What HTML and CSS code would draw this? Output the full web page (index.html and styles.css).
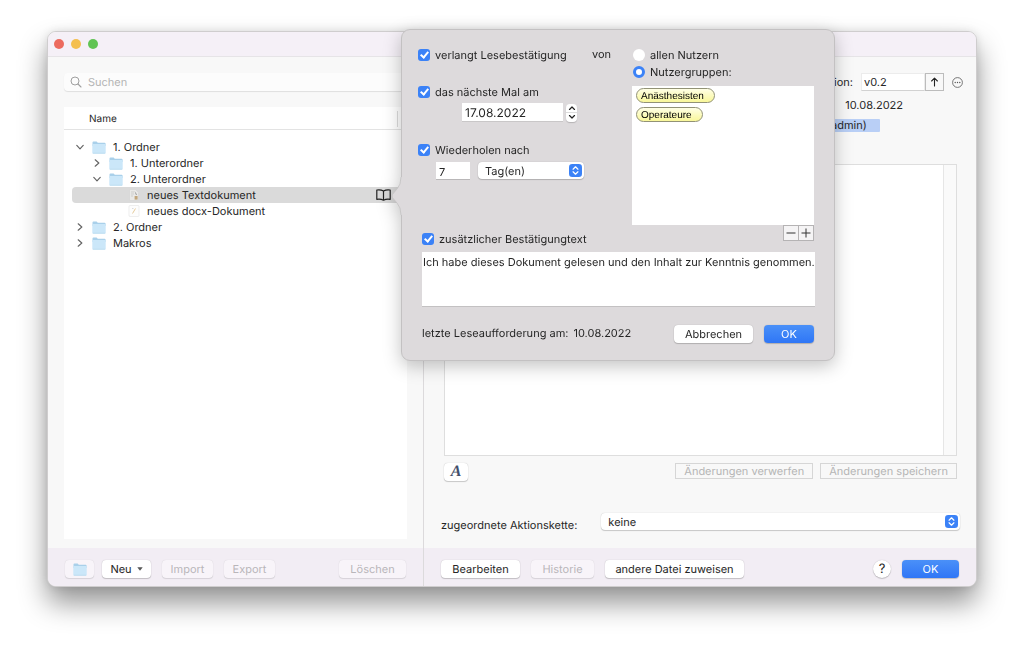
FILE: index.html
```html
<!DOCTYPE html>
<html lang="de">
<head>
<meta charset="utf-8">
<meta name="viewport" content="width=device-width, initial-scale=1">
<title>Dokumente</title>
<link rel="stylesheet" href="styles.css">
</head>
<body>
<svg class="defs" aria-hidden="true">
  <symbol id="folder" viewBox="0 0 14 13">
    <path d="M0.5 1.6Q0.5 0.6 1.5 0.6H4.6L5.8 1.8H12.6Q13.6 1.8 13.6 2.8V5H0.5Z" fill="#a9d0ea"/>
    <rect x="0.3" y="3" width="13.4" height="9.6" rx="0.8" fill="#cbe7f9"/>
    <path d="M0.8 12.3H13.2" stroke="#b3d7ee" stroke-width="0.7"/>
  </symbol>
  <symbol id="right" viewBox="0 0 8 8"><path d="M2.2 0.8L5.8 4L2.2 7.2" fill="none" stroke="#666" stroke-width="1.2" stroke-linecap="round" stroke-linejoin="round"/></symbol>
  <symbol id="down" viewBox="0 0 8 8"><path d="M0.8 2.4L4 5.8L7.2 2.4" fill="none" stroke="#666" stroke-width="1.2" stroke-linecap="round" stroke-linejoin="round"/></symbol>
  <symbol id="updown" viewBox="0 0 14 14">
    <rect width="14" height="14" rx="3.5" fill="#3b82f7"/>
    <path d="M4.4 5.6L7 3L9.6 5.6M4.4 8.4L7 11L9.6 8.4" fill="none" stroke="#fff" stroke-width="1.3" stroke-linecap="round" stroke-linejoin="round"/>
  </symbol>
</svg>

<main class="window">
  <header class="titlebar">
    <button class="light red" aria-label="Schließen"></button>
    <button class="light yellow" aria-label="Minimieren"></button>
    <button class="light green" aria-label="Zoomen"></button>
  </header>

  <div class="panes">
    <section class="side">
      <div class="side-main">
        <label class="search">
          <svg width="12" height="12" viewBox="0 0 12 12"><circle cx="5" cy="5" r="4" fill="none" stroke="#a0a0a0"/><path d="M8 8L11 11" stroke="#a0a0a0" stroke-width="1.1" stroke-linecap="round"/></svg>
          <input type="search" placeholder="Suchen" aria-label="Suchen">
        </label>
        <div class="list">
          <div class="list-head"><span>Name</span></div>
          <ul class="tree">
            <li class="row"><button class="twist" aria-label="Zuklappen"><svg><use href="#down"/></svg></button><svg class="folder"><use href="#folder"/></svg><span>1. Ordner</span></li>
            <li class="row level1"><button class="twist" aria-label="Aufklappen"><svg><use href="#right"/></svg></button><svg class="folder"><use href="#folder"/></svg><span>1. Unterordner</span></li>
            <li class="row level1"><button class="twist" aria-label="Zuklappen"><svg><use href="#down"/></svg></button><svg class="folder"><use href="#folder"/></svg><span>2. Unterordner</span></li>
            <li class="row level2 selected">
              <svg class="doc" viewBox="0 0 12 12"><path d="M1.5 0.5H7.5L10.5 3.5V11.5H1.5Z" fill="#e9e9e7" stroke="#d0d0d0" stroke-width="0.5"/><path d="M3 3H6M3 5H6M3 7H5" stroke="#c4c4c2" stroke-width="0.7"/><path d="M6.5 2L9 5.5L8 6Z" fill="#8d8f90"/><rect x="6.6" y="7" width="3" height="3.6" fill="#c2a77d"/></svg>
              <span>neues Textdokument</span>
              <svg class="book" viewBox="0 0 15 12"><path d="M7.5 2Q4.5 0.3 0.8 1V10.3Q4.5 9.6 7.5 11.2Q10.5 9.6 14.2 10.3V1Q10.5 0.3 7.5 2V11" fill="none" stroke="#222" stroke-width="1.2" stroke-linejoin="round"/></svg>
            </li>
            <li class="row level2">
              <svg class="doc" viewBox="0 0 12 12"><rect x="1" y="0.5" width="10" height="11" rx="1" fill="#fdfdfd" stroke="#e6e6e6" stroke-width="0.7"/><path d="M4.5 8.5L7.5 3.5" stroke="#e3c58f" stroke-width="0.9"/><path d="M4 3.5H5.5" stroke="#ccc" stroke-width="0.7"/></svg>
              <span>neues docx-Dokument</span>
            </li>
            <li class="row"><button class="twist" aria-label="Aufklappen"><svg><use href="#right"/></svg></button><svg class="folder"><use href="#folder"/></svg><span>2. Ordner</span></li>
            <li class="row"><button class="twist" aria-label="Aufklappen"><svg><use href="#right"/></svg></button><svg class="folder"><use href="#folder"/></svg><span>Makros</span></li>
          </ul>
        </div>
      </div>
      <footer class="bar">
        <button class="btn off w-folder" disabled aria-label="Neuer Ordner"><svg class="folder"><use href="#folder"/></svg></button>
        <button class="btn w-neu">Neu<svg width="6" height="4" viewBox="0 0 6 4"><path d="M0.3 0.3H5.7L3 3.7Z" fill="#555"/></svg></button>
        <button class="btn off w-import" disabled>Import</button>
        <button class="btn off w-import" disabled>Export</button>
        <button class="btn off w-delete" disabled>Löschen</button>
      </footer>
    </section>

    <section class="detail">
      <div class="detail-main">
        <div class="version">
          <label for="version">Version:</label>
          <input id="version" type="text" value="v0.2">
          <button class="up" aria-label="Version erhöhen"><svg width="9" height="10" viewBox="0 0 9 10"><path d="M4.5 9V1.2M1.6 4L4.5 1.1L7.4 4" fill="none" stroke="#222" stroke-width="1.1" stroke-linecap="round" stroke-linejoin="round"/></svg></button>
          <button class="more" aria-label="Mehr"><svg width="11" height="11" viewBox="0 0 11 11"><circle cx="5.5" cy="5.5" r="4.9" fill="none" stroke="#666" stroke-width="0.9"/><circle cx="3.2" cy="5.5" r="0.7" fill="#555"/><circle cx="5.5" cy="5.5" r="0.7" fill="#555"/><circle cx="7.8" cy="5.5" r="0.7" fill="#555"/></svg></button>
        </div>
        <p class="changed">10.08.2022</p>
        <p class="author"><span>(admin)</span></p>
        <div class="editor">
          <textarea aria-label="Inhalt"></textarea>
          <div class="gutter"></div>
        </div>
        <div class="tools">
          <button class="btn font" aria-label="Schrift">A</button>
          <button class="flat first" disabled>Änderungen verwerfen</button>
          <button class="flat" disabled>Änderungen speichern</button>
        </div>
        <div class="chain">
          <label for="chain">zugeordnete Aktionskette:</label>
          <span class="select"><select id="chain"><option>keine</option></select><svg><use href="#updown"/></svg></span>
        </div>
      </div>
      <footer class="bar">
        <button class="btn w-edit">Bearbeiten</button>
        <button class="btn off w-history" disabled>Historie</button>
        <button class="btn w-assign">andere Datei zuweisen</button>
        <button class="btn help" aria-label="Hilfe">?</button>
        <button class="btn primary w-ok">OK</button>
      </footer>
    </section>
  </div>
</main>

<form class="popover">
  <svg class="arrow" viewBox="0 0 11 38"><path d="M11 0H10Q10 8 6 12L1.5 17.3Q0.5 19 1.5 20.7L6 26Q10 30 10 38H11Z" fill="#dddadc"/><path d="M10 0Q10 8 6 12L1.5 17.3Q0.5 19 1.5 20.7L6 26Q10 30 10 38" fill="none" stroke="#c3c1c2" stroke-width="0.8"/></svg>
  <div class="settings">
    <div class="options">
      <div class="line"><label class="check"><input type="checkbox" checked>verlangt Lesebestätigung</label><span class="from">von</span></div>
      <label class="check next"><input type="checkbox" checked>das nächste Mal am</label>
      <div class="date">
        <input type="text" value="17.08.2022" aria-label="Datum">
        <span class="stepper">
          <button type="button" aria-label="Später"><svg viewBox="0 0 8 4"><path d="M1.5 3.5L4 1L6.5 3.5" fill="none" stroke="#222" stroke-width="1.2" stroke-linecap="round" stroke-linejoin="round"/></svg></button>
          <button type="button" aria-label="Früher"><svg viewBox="0 0 8 4"><path d="M1.5 0.5L4 3L6.5 0.5" fill="none" stroke="#222" stroke-width="1.2" stroke-linecap="round" stroke-linejoin="round"/></svg></button>
        </span>
      </div>
      <label class="check again"><input type="checkbox" checked>Wiederholen nach</label>
      <div class="repeat">
        <input type="text" value="7" aria-label="Anzahl">
        <span class="select"><select aria-label="Einheit"><option>Tag(en)</option></select><svg><use href="#updown"/></svg></span>
      </div>
      <label class="check extra"><input type="checkbox" checked>zusätzlicher Bestätigungtext</label>
    </div>
    <div class="users">
      <label class="radio"><input type="radio" name="who">allen Nutzern</label>
      <label class="radio"><input type="radio" name="who" checked>Nutzergruppen:</label>
      <ul class="groups">
        <li>Anästhesisten</li>
        <li>Operateure</li>
      </ul>
      <div class="plusminus">
        <button type="button" aria-label="Entfernen"><svg viewBox="0 0 10 10"><path d="M0.5 5H9.5" stroke="#333"/></svg></button>
        <button type="button" aria-label="Hinzufügen"><svg viewBox="0 0 10 10"><path d="M0.5 5H9.5M5 0.5V9.5" stroke="#333"/></svg></button>
      </div>
    </div>
  </div>
  <textarea class="message" aria-label="Bestätigungstext">Ich habe dieses Dokument gelesen und den Inhalt zur Kenntnis genommen.</textarea>
  <div class="actions">
    <p>letzte Leseaufforderung am:</p><p>10.08.2022</p>
    <button type="button" class="btn w-cancel">Abbrechen</button>
    <button type="button" class="btn primary w-confirm">OK</button>
  </div>
</form>
</body>
</html>
```

FILE: styles.css
```css
* { box-sizing: border-box; }

body {
  margin: 0;
  padding: 31px 47px 62px;
  min-height: 100vh;
  display: flex;
  position: relative;
  background: #fff;
  color: #262626;
  font: 11px/16px Inter, "Liberation Sans", sans-serif;
  text-rendering: geometricPrecision;
}

button, input, select, textarea { font: inherit; color: inherit; text-rendering: inherit; margin: 0; padding: 0; border: 0; border-radius: 0; background: none; outline: 0; }
textarea { resize: none; display: block; }
p, ul { margin: 0; padding: 0; list-style: none; }
svg { display: block; flex: none; }
.defs { position: absolute; width: 0; height: 0; }

/* Window */
.window {
  flex: 1;
  display: flex;
  flex-direction: column;
  border: 1px solid #cfcdce;
  border-radius: 9px;
  overflow: hidden;
  background: #f8f8f8;
  box-shadow: 0 16px 28px rgba(0, 0, 0, .42), 0 0 8px rgba(0, 0, 0, .1);
}
.titlebar { display: flex; gap: 7px; align-items: center; height: 25px; padding-left: 6px; background: #f5f0f7; border-bottom: 1px solid #e6e4e7; }
.light { width: 10px; height: 10px; border-radius: 50%; }
.red { background: #ec6a5e; }
.yellow { background: #f4bf4f; }
.green { background: #61c454; }
.panes { flex: 1; display: flex; }
.side { flex: none; width: 376px; display: flex; flex-direction: column; border-right: 1px solid #dcdadc; }
.detail { flex: 1; min-width: 0; display: flex; flex-direction: column; }
.bar { display: flex; align-items: center; gap: 11px; height: 38px; padding: 4px 17px 0; background: #f2edf4; }

/* File list */
.side-main { flex: 1; display: flex; flex-direction: column; padding: 16px 16px 9px; }
.search { display: flex; align-items: center; gap: 6px; height: 18px; padding-left: 6px; border-radius: 4px; background: #fcfcfc; box-shadow: 0 1px 1px rgba(0, 0, 0, .1); }
.search input { flex: 1; }
.search input::placeholder { color: #b4b4b4; opacity: 1; }
.list { flex: 1; margin-top: 16px; background: #fff; }
.list-head { height: 23px; padding: 4px 9px 0 25px; border-bottom: 1px solid #e3e3e3; font-size: 10px; line-height: 16px; }
.list-head span { display: block; border-right: 1px solid #dcdcdc; }
.tree { padding: 9px 6px 0 8px; }
.row { display: flex; align-items: center; height: 16px; padding: 0 10px 0 4px; border-radius: 4px; }
.row.selected { background: #dadada; }
.row.level1 { padding-left: 21px; }
.row.level2 { padding-left: 56px; }
.twist { width: 8px; height: 8px; margin-right: 8px; }
.twist svg { width: 8px; height: 8px; }
.folder { width: 14px; height: 13px; margin-right: 7px; }
.doc { width: 12px; height: 12px; margin-right: 7px; }
.book { width: 15px; height: 12px; margin-left: auto; }

/* Buttons */
.btn { display: flex; align-items: center; justify-content: center; height: 18px; border-radius: 4px; background: #fff; white-space: nowrap; box-shadow: 0 0 1px rgba(0, 0, 0, .25), 0 1px 1px rgba(0, 0, 0, .18); }
.btn.off { background: #f8f4f9; color: #b9b6ba; box-shadow: 0 0 1px rgba(0, 0, 0, .15), 0 1px 1px rgba(0, 0, 0, .1); }
.btn.primary { background: linear-gradient(#4a90f8, #2f76f6); color: #fff; }
.btn .folder { margin: 0; }
.w-folder { width: 29px; }
.w-neu { width: 49px; gap: 5px; margin-left: -3px; }
.w-import { width: 51px; }
.w-delete { width: 67px; margin-left: auto; }
.w-edit { width: 79px; }
.w-history { width: 63px; }
.w-assign { width: 139px; }
.w-ok { width: 57px; }
.w-cancel { width: 79px; margin-left: auto; }
.w-confirm { width: 50px; }
.help { width: 18px; border-radius: 50%; margin-left: auto; font-size: 13px; }

/* Document details */
.detail-main { flex: 1; display: flex; flex-direction: column; padding: 16px 19px 15px 20px; }
.version { display: flex; align-items: center; justify-content: flex-end; height: 18px; margin-right: -6px; }
.version input { width: 64px; height: 18px; margin-left: 8px; padding-left: 2px; background: #fff; border: 1px solid #ececec; border-bottom-color: #d2d2d2; }
.up { display: flex; align-items: center; justify-content: center; width: 19px; height: 18px; border: 1px solid #bcbcbc; }
.more { width: 11px; height: 11px; margin-left: 8px; }
.changed { margin: 6px 54px 0 0; text-align: right; }
.author { display: flex; justify-content: flex-end; margin: 6px 77px 0 0; line-height: 13px; }
.author span { width: 58px; padding-left: 5px; border-radius: 1px; background: #b9cff6; }
.editor { flex: 1; display: flex; margin-top: 32px; border: 1px solid #dedede; background: #fff; }
.editor textarea { flex: 1; }
.gutter { width: 13px; border-left: 1px solid #e6e6e6; background: #fafafa; }
.tools { display: flex; align-items: flex-start; gap: 7px; height: 18px; margin-top: 7px; }
.font { width: 24px; color: #43506b; font: italic bold 16px/18px "Liberation Serif", serif; }
.flat { height: 16px; padding: 0 8px; border: 1px solid #d6d6d6; color: #b5b5b5; white-space: nowrap; line-height: 14px; }
.flat.first { margin-left: auto; }
.chain { display: flex; align-items: center; gap: 24px; margin: 29px -3px 0 -3px; }
.chain .select { flex: 1; }
.chain label { padding-top: 7px; }
.select { position: relative; display: flex; height: 17px; border-radius: 4px; background: #fff; box-shadow: 0 0 1px rgba(0, 0, 0, .25), 0 1px 1px rgba(0, 0, 0, .18); }
.select select { appearance: none; width: 100%; padding: 0 20px 0 7px; }
.select svg { position: absolute; right: 2px; top: 2px; width: 13px; height: 13px; pointer-events: none; }

/* Popover */
.popover {
  position: absolute;
  left: 401px;
  top: 29px;
  width: 434px;
  padding: 16px 20px 17px 16px;
  border: 1px solid #c3c1c2;
  border-radius: 9px;
  background: #dddadc;
  filter: drop-shadow(0 5px 9px rgba(0, 0, 0, .24));
}
.arrow { position: absolute; left: -11px; top: 147px; width: 11px; height: 38px; }
.settings { display: flex; }
.options { width: 214px; }
.users { flex: 1; }
.line { display: flex; }
.check, .radio { display: flex; align-items: center; gap: 5px; height: 17px; white-space: nowrap; }
.from { width: 40px; margin-left: auto; line-height: 17px; }
.check input { appearance: none; position: relative; width: 12px; height: 12px; border-radius: 3px; background: #3b82f7; }
.check input:checked::after { content: ""; position: absolute; left: 4px; top: 1px; width: 3px; height: 6px; border: solid #fff; border-width: 0 2px 2px 0; transform: rotate(40deg); }
.next { margin-top: 20px; }
.date { display: flex; align-items: center; gap: 3px; margin: 3px 0 0 44px; }
.date input { width: 101px; height: 19px; padding: 1px 0 0 3px; background: #fff; border-bottom: 1px solid #c9c7c8; font-size: 12px; }
.stepper { display: flex; flex-direction: column; width: 11px; height: 18px; border-radius: 4px; background: #fff; box-shadow: 0 1px 1px rgba(0, 0, 0, .18); }
.stepper button { flex: 1; display: flex; align-items: center; justify-content: center; }
.stepper button + button { border-top: 1px solid #ddd; }
.stepper svg { width: 8px; height: 4px; }
.again { margin-top: 19px; }
.repeat { display: flex; gap: 8px; margin: 4px 0 0 18px; }
.repeat input { width: 34px; height: 18px; padding: 2px 0 0 3px; background: #fff; border-bottom: 1px solid #b9b7b8; }
.repeat .select { width: 106px; }
.extra { margin: 50px 0 0 4px; }
.radio { margin-left: 1px; }
.radio input { appearance: none; width: 12px; height: 12px; border-radius: 50%; background: #fff; }
.radio input:checked { border: 3px solid #3b82f7; }
.groups { height: 139px; margin-top: 6px; padding: 2px 4px; background: #fff; }
.groups li { width: max-content; height: 15px; margin-bottom: 4px; padding: 0 10px 0 4px; border: 1px solid #929276; border-radius: 8px; background: linear-gradient(#ffffe6, #f9f79a); color: #000; font: 10px/15px "Liberation Sans", Arial, sans-serif; }
.plusminus { display: flex; justify-content: flex-end; }
.plusminus button { display: flex; align-items: center; justify-content: center; width: 16px; height: 16px; border: 1px solid #b5b3b4; background: #f5f4f5; }
.plusminus button + button { margin-left: -1px; }
.plusminus svg { width: 10px; height: 10px; }
.message { width: calc(100% - 3px); height: 55px; margin: 5px 0 0 4px; padding: 2px 0 0 1px; background: #fff; border-bottom: 1px solid #c3c1c2; overflow: hidden; white-space: pre; }
.actions { display: flex; align-items: center; gap: 11px; margin: 18px 0 0 4px; }
.actions p { padding-bottom: 2px; }
.actions p + p { margin-left: -6px; }
```
